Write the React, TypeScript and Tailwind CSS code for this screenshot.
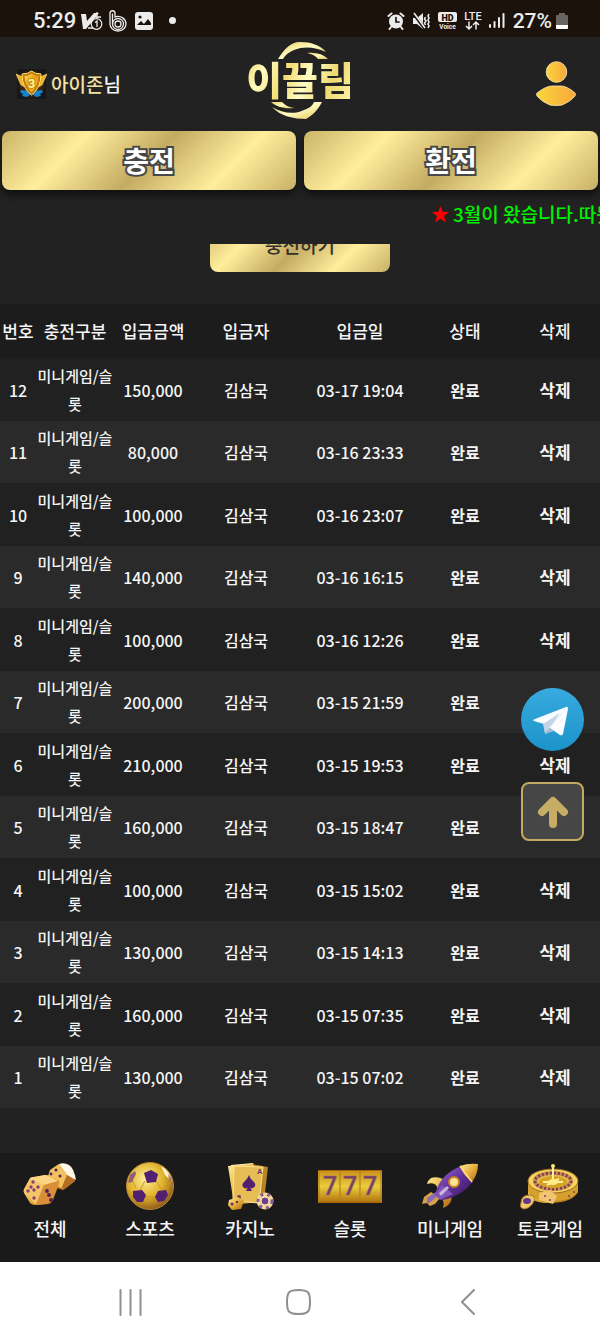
import React from "react";

type Deposit = { no: number; amount: string; date: string };

const deposits: Deposit[] = [
  { no: 12, amount: "150,000", date: "03-17 19:04" },
  { no: 11, amount: "80,000", date: "03-16 23:33" },
  { no: 10, amount: "100,000", date: "03-16 23:07" },
  { no: 9, amount: "140,000", date: "03-16 16:15" },
  { no: 8, amount: "100,000", date: "03-16 12:26" },
  { no: 7, amount: "200,000", date: "03-15 21:59" },
  { no: 6, amount: "210,000", date: "03-15 19:53" },
  { no: 5, amount: "160,000", date: "03-15 18:47" },
  { no: 4, amount: "100,000", date: "03-15 15:02" },
  { no: 3, amount: "130,000", date: "03-15 14:13" },
  { no: 2, amount: "160,000", date: "03-15 07:35" },
  { no: 1, amount: "130,000", date: "03-15 07:02" },
];

const gold =
  "bg-[linear-gradient(135deg,#cbb467_0%,#ffee9c_25%,#c4ab63_50%,#ffee9c_75%,#c8b066_100%)]";

function StatusBar() {
  return (
    <div className="flex h-[37px] items-center justify-between bg-[#1b120c] pt-1 pr-8 pl-[33px] font-['Roboto',sans-serif] text-[#ececec]">
      <div className="flex items-center gap-2">
        <span className="text-[22px] leading-7">5:29</span>
        <svg className="-ml-1 h-5 w-[23px]" viewBox="0 0 23 20" fill="none" stroke="#ececec">
          <path d="M1 3h5l1 7 7-8h5L6 18H3z" fill="#ececec" stroke="none" />
          <path d="M13 6h8M17 1v6M10 12l4-3M8 17h5" strokeWidth="1.3" />
          <circle cx="16.500" cy="13" r="5.300" fill="#1b120c" strokeWidth="1.200" />
          <path d="M15 11.500l2-1.500v6" strokeWidth="1.300" />
        </svg>
        <svg className="-ml-0.5 h-[22px] w-[18px]" viewBox="0 0 18 22" fill="none" stroke="#ececec" strokeWidth="1.300">
          <path d="M1 14V3c0-3 5-3 5 0v4c6-2 11 2 11 7 0 4-3.500 7-8 7s-8-3-8-7z" />
          <path d="M3.500 14V3.500" />
          <circle cx="9" cy="14" r="5.500" />
          <circle cx="9" cy="14" r="3" />
        </svg>
        <svg className="h-[18px] w-[18px]" viewBox="0 0 18 18">
          <rect width="18" height="18" rx="3" fill="#ececec" />
          <circle cx="5" cy="5" r="1.600" fill="#1b120c" />
          <path d="M2 13l4-4 3 3 4-5 3 4v2z" fill="#1b120c" />
        </svg>
        <span className="ml-2 h-[7px] w-[7px] rounded-full bg-[#ececec]" />
      </div>
      <div className="flex items-center gap-2">
        <svg className="h-[18px] w-[18px]" viewBox="0 0 18 18" fill="none" stroke="#ececec" strokeWidth="2" strokeLinecap="round">
          <path d="M1.500 4l3-2.500M16.500 4l-3-2.500M4 15l-1.500 2M14 15l1.500 2" />
          <circle cx="9" cy="9.500" r="7" fill="#ececec" stroke="none" />
          <path d="M9 5.500v4.500h3" stroke="#1b120c" strokeWidth="1.700" />
        </svg>
        <svg className="h-[18px] w-[17px]" viewBox="0 0 17 18" fill="none" stroke="#ececec" strokeWidth="1.600">
          <path d="M0 6h4l6-5v16l-6-5H0z" fill="#ececec" stroke="none" />
          <path d="M0 1l12 16" stroke="#1b120c" strokeWidth="3" />
          <path d="M1 1l11 15M12.500 5l-1 2 1.500 2-1.500 2 1 2M16 2l-1 2 1 2-1 2 1 2-1 2 1 2-1 2" />
        </svg>
        <svg className="h-[17px] w-[19px]" viewBox="0 0 19 17">
          <rect width="19" height="10" rx="2" fill="#ececec" />
          <text x="9.500" y="8.500" textAnchor="middle" fontSize="9" fontWeight="900" fill="#1b120c">HD</text>
          <text x="9.500" y="16.500" textAnchor="middle" fontSize="6.500" fontWeight="700" fill="#ececec">Voice</text>
        </svg>
        <svg className="-ml-0.5 h-[19px] w-[20px]" viewBox="0 0 20 19" stroke="#ececec" fill="none" strokeWidth="1.500">
          <text x="10" y="8.500" textAnchor="middle" fontSize="11" fontWeight="500" fill="#ececec" stroke="none">LTE</text>
          <path d="M6 10.500v7M3 15l3 3 3-3M13 18.500v-7M10 14l3-3 3 3" />
        </svg>
        <svg className="-ml-0.5 h-[17px] w-[16px]" viewBox="0 0 16 17" fill="#ececec">
          <rect x="0" y="12" width="2" height="4" rx="1" />
          <rect x="4.500" y="9" width="2" height="7" rx="1" />
          <rect x="9" y="5" width="2" height="11" rx="1" />
          <rect x="13.500" y="1" width="2" height="15" rx="1" />
        </svg>
        <span className="text-[21px] leading-7">27%</span>
        <svg className="-ml-1 h-[18px] w-3" viewBox="0 0 12 18">
          <path d="M3 1h6v2h2q1 0 1 1v9H0V4q0-1 1-1h2z" fill="#69645f" />
          <path d="M0 13h12v3q0 1-1 1H1q-1 0-1-1z" fill="#fff" />
        </svg>
      </div>
    </div>
  );
}

function Medal() {
  return (
    <svg className="h-8 w-[31px]" viewBox="0 0 31 32">
      <defs>
        <linearGradient id="medal" x1="0" y1="0" x2="1" y2="1">
          <stop offset="0" stopColor="#ffdf59" />
          <stop offset=".5" stopColor="#e69a16" />
          <stop offset="1" stopColor="#ffd242" />
        </linearGradient>
        <radialGradient id="glow">
          <stop offset="0" stopColor="#a85b00" />
          <stop offset="1" stopColor="#141414" />
        </radialGradient>
      </defs>
      <rect x="1" y="1" width="29" height="30" fill="url(#glow)" opacity=".75" />
      <path d="M5 22l7 1 3 3-4 3-5-1 1-2-3-2zM26 22l-7 1-3 3 4 3 5-1-1-2 3-2z" fill="#1682cf" />
      <path d="M0 6l7 3 2 10-4-2zM31 6l-7 3-2 10 4-2z" fill="#f3ae25" stroke="#ffe582" strokeWidth=".6" />
      <path d="M6 6q6 0 9.500-3Q19 6 25 6q0 14-9.500 21Q6 20 6 6z" fill="#c57908" stroke="#ffe26e" />
      <path d="M8.500 8q4 0 7-2.500Q19 8 22.500 8q-.5 10-7 16Q9 18 8.500 8z" fill="url(#medal)" />
      <text x="15.500" y="19.500" textAnchor="middle" fontFamily="Roboto" fontSize="13" fontWeight="900" fill="#ffef8a" stroke="#c27c0a" strokeWidth="1.500" paintOrder="stroke">3</text>
    </svg>
  );
}

function Logo() {
  return (
    <a href="#home" className="relative flex h-20 w-28 items-center justify-center">
      <svg className="absolute inset-0 h-20 w-28" viewBox="0 0 112 80" aria-hidden="true">
        <defs>
          <linearGradient id="swoosh" x1="0" y1="0" x2="1" y2="1">
            <stop offset="0" stopColor="#ecd060" />
            <stop offset=".5" stopColor="#fffcc4" />
            <stop offset="1" stopColor="#e2c350" />
          </linearGradient>
        </defs>
        <g fill="url(#swoosh)">
          <path d="M34 19C40 9 47 2 56 2c11 0 20 3 26 10-11-5-22-6-32-2-5 2-9 5-11 9z" />
          <path d="M63 13c9-1 16 1 21 6H74c-2-3-6-5-11-6z" />
          <path d="M27 62h11c3 3 6 5 12 6-10 1-17-1-23-6z" />
          <path d="M28 67c10 6 22 8 32 3 6-2 9-5 10-8h8c-4 8-9 13-16 17-12 0-26-3-34-12z" />
        </g>
      </svg>
      <span className="relative bg-[linear-gradient(115deg,#efd468,#fffcbe_18%,#f3dc74_38%,#fffcc4_55%,#eed970_75%,#fff8ae)] bg-clip-text pb-1 font-['Noto_Sans_CJK_KR',sans-serif] text-[39px] leading-10 font-black whitespace-nowrap text-transparent">
        이끌림
      </span>
    </a>
  );
}

function Header() {
  return (
    <header className="grid h-[94px] grid-cols-3 items-center pr-6 pl-4">
      <div className="flex items-center gap-1">
        <Medal />
        <span className="text-[19px] leading-7 whitespace-nowrap">
          <span className="text-[#f6e2a2]">아이존</span>님
        </span>
      </div>
      <div className="-mt-2 ml-2 flex justify-center">
        <Logo />
      </div>
      <button type="button" aria-label="내 정보" className="justify-self-end">
        <svg className="h-[46px] w-10" viewBox="0 0 40 46">
          <defs>
            <linearGradient id="user">
              <stop offset="0" stopColor="#f9d63c" />
              <stop offset="1" stopColor="#f8a83a" />
            </linearGradient>
          </defs>
          <g fill="url(#user)" stroke="#ffeebc" strokeWidth=".8">
            <circle cx="20.500" cy="11" r="10.300" />
            <path d="M1 32q9-7 15-7h9q6 0 14 7 1 1 0 3-5 6-13 9-6 1-12 0Q6 41 1 35q-1-2 0-3z" />
          </g>
        </svg>
      </button>
    </header>
  );
}

function GoldButton({ label }: { label: string }) {
  return (
    <button
      type="button"
      className={`h-[59px] flex-1 rounded-lg pb-0.5 text-[28px] leading-8 font-bold text-white shadow-[0_5px_7px_0_#111111] [-webkit-text-stroke:4px_#474747] [paint-order:stroke_fill] ${gold}`}
    >
      {label}
    </button>
  );
}

function DepositTable() {
  const cell = "p-0 text-center";
  return (
    <table className="w-full table-fixed border-collapse text-base leading-7 font-medium">
      <colgroup>
        <col className="w-[6%]" />
        <col className="w-[13%]" />
        <col className="w-[13%]" />
        <col className="w-[18%]" />
        <col className="w-[20%]" />
        <col className="w-[15%]" />
        <col className="w-[15%]" />
      </colgroup>
      <thead>
        <tr className="h-[54px] bg-[#1c1c1c] text-[17px]">
          {["번호", "충전구분", "입금금액", "입금자", "입금일", "상태", "삭제"].map((h) => (
            <th key={h} scope="col" className="p-0 text-center font-medium whitespace-nowrap">
              {h}
            </th>
          ))}
        </tr>
      </thead>
      <tbody>
        {deposits.map((d) => (
          <tr key={d.no} className="h-[63px] bg-[#212121] even:h-[62px] even:bg-[#2a2a2a]">
            <td className={cell}>{d.no}</td>
            <td className={`${cell} text-[15px] whitespace-nowrap`}>
              미니게임/슬
              <br />롯
            </td>
            <td className={cell}>{d.amount}</td>
            <td className={cell}>김삼국</td>
            <td className={cell}>{d.date}</td>
            <td className={`${cell} font-bold`}>완료</td>
            <td className={cell}>
              <button type="button" className="text-[17px] leading-7 font-bold">
                삭제
              </button>
            </td>
          </tr>
        ))}
      </tbody>
    </table>
  );
}

function IconDefs() {
  return (
    <defs>
      <linearGradient id="g1" x1="0" y1="0" x2="1" y2="1">
        <stop offset="0" stopColor="#ffeb9a" />
        <stop offset=".5" stopColor="#e7ae3b" />
        <stop offset="1" stopColor="#a86419" />
      </linearGradient>
      <radialGradient id="g2" cx=".4" cy=".35" r=".65">
        <stop offset="0" stopColor="#fff09b" />
        <stop offset=".6" stopColor="#dfb129" />
        <stop offset="1" stopColor="#95621b" />
      </radialGradient>
      <linearGradient id="g3" x1="0" y1="0" x2="1" y2="1">
        <stop offset="0" stopColor="#a26bd5" />
        <stop offset=".5" stopColor="#60309a" />
        <stop offset="1" stopColor="#351355" />
      </linearGradient>
    </defs>
  );
}

function DiceIcon() {
  return (
    <svg className="h-12 w-16" viewBox="0 0 64 48">
      <IconDefs />
      <path d="M41 2l12 4 4 13-12 9-16-5 5-16z" fill="#c67b2a" />
      <path d="M41 2q5-2 10 1 5 3 7 15l-9-5z" fill="#fff8e4" />
      <path d="M32 8l9-6 8 11-5 13-16-6z" fill="#f3c160" />
      <path d="M49 13l8 6-10 8-3-2z" fill="#b46d22" />
      <path d="M11 18q1-3 4-3l12-2q3 0 5 1l8 4q2 1 1 4l-6 16q-1 3-5 4l-13 1q-3 0-5-2L6 31q-1-2 0-4z" fill="url(#g1)" />
      <path d="M12 16l16-3 12 6-14 4z" fill="#fbd484" />
      <path d="M12 17l14 6-8 19-2-1L6 29z" fill="#f6c46a" />
      <path d="M26 23l15-4-7 19-5 4-11 1z" fill="#d98f38" />
      <g fill="#8a3f74">
        <circle cx="15" cy="20" r="1.700" /><circle cx="20" cy="25" r="1.700" /><circle cx="13" cy="25" r="1.700" />
        <circle cx="10" cy="29" r="1.700" /><circle cx="16" cy="28" r="1.700" /><circle cx="16" cy="36" r="1.700" />
      </g>
      <g fill="#4f2253">
        <circle cx="29" cy="29" r="1.900" /><circle cx="31" cy="33" r="1.900" /><circle cx="33" cy="38" r="1.900" />
        <circle cx="38" cy="8" r="1.500" /><circle cx="42" cy="14" r="1.500" /><circle cx="33" cy="12" r="1.400" />
      </g>
    </svg>
  );
}

function BallIcon() {
  return (
    <svg className="h-12 w-16" viewBox="0 0 64 48">
      <circle cx="32" cy="24" r="23.500" fill="url(#g2)" stroke="#b48734" />
      <path d="M43 4q9 5 11 16l-7-7z" fill="#fff2cf" />
      <g fill="none" stroke="#c9962a" strokeWidth="1">
        <path d="M32 20v-5M27 19l-5 9M38 19l6 9M27 35h11M18 26l-4-8M49 27l3-7M27 35l4 6 7-6" />
      </g>
      <g fill="#512071">
        <path d="M26 11l7-3 7 4-2 8-9 1z" />
        <path d="M15 29l9-1 4 5-3 7h-6l-4-5z" />
        <path d="M40 29l8-1 2 5-4 6-6 1-3-5z" />
        <path d="M12 13l5-4 1 3-4 8-4 1z" fill="#925d75" />
        <path d="M50 12l3 4 1 5-3-3z" fill="#aa7c70" />
      </g>
    </svg>
  );
}

function CardsIcon() {
  return (
    <svg className="h-12 w-16" viewBox="0 0 64 48">
      <path d="M34 2l16 3-4 34-16-2z" fill="#b98424" />
      <path d="M13 3l22-2 8 38-25 3z" fill="#fff0b5" />
      <path d="M10 4l25-2 6 38-25 3z" fill="url(#g1)" />
      <path d="M16 4l29 1-4 36-26-2z" fill="#e6bd55" stroke="#ffe298" />
      <path d="M31 13q1 4 5 7 3 4-1 6-2 1-3-1l2 4h-6l2-4q-2 3-5 0-2-3 2-6 3-3 4-6z" fill="#51216f" />
      <text x="39" y="12" fontFamily="Roboto" fontSize="8" fontWeight="700" fill="#6c3868">A</text>
      <circle cx="21" cy="35" r="2" fill="#74345c" />
      <path d="M11 38l9-3 6 4-3 8-9 1-4-5z" fill="url(#g1)" />
      <circle cx="14" cy="42" r="1.500" fill="#6a3158" /><circle cx="19" cy="40" r="1.200" fill="#6a3158" />
      <circle cx="47" cy="39" r="8.500" fill="#f7d79a" />
      <circle cx="47" cy="39" r="7" fill="none" stroke="#846090" strokeWidth="3" strokeDasharray="3 4" />
      <circle cx="47" cy="39" r="4" fill="#6c3d91" stroke="#ffe8b1" />
    </svg>
  );
}

function SlotsIcon() {
  return (
    <svg className="h-12 w-16" viewBox="0 0 64 48">
      <defs>
        <linearGradient id="slot" x2="0" y2="1">
          <stop offset="0" stopColor="#c98e1a" /><stop offset=".5" stopColor="#e9cd3c" /><stop offset="1" stopColor="#b06f0c" />
        </linearGradient>
      </defs>
      <path d="M0 8h64v33H0z" fill="url(#slot)" />
      <path d="M1 8v32M22 8v32M42 8v32M63 8v32" stroke="#b8801a" strokeWidth="1.200" />
      <path d="M0 8.500h64M0 40h64" stroke="#a8620c" strokeWidth="1.200" />
      <g fontFamily="Roboto" fontWeight="500" fontSize="25" fill="#754060" stroke="#9c6578" strokeWidth=".6" textAnchor="middle">
        <text x="12" y="33">7</text><text x="32" y="33">7</text><text x="52" y="33">7</text>
      </g>
    </svg>
  );
}

function RocketIcon() {
  return (
    <svg className="h-12 w-16" viewBox="0 0 64 48">
      <path d="M25 17q-6-3-12-1-3 2-4 6 6-2 9 1l2 4zM31 32q4 2 2 7-2 5-8 7 2-7-2-10z" fill="url(#g1)" />
      <path d="M13 30l9 6-5 6-5 2-3-3-5 1 2-7z" fill="#d5a14b" />
      <path d="M9 36l9-6 3 3-10 8-2 0z" fill="#8e6cb4" />
      <path d="M17 33q4-20 26-29l12 16Q42 35 25 38z" fill="url(#g3)" />
      <path d="M17 33l7-10 11 9-13 6z" fill="#8255b8" />
      <path d="M42 4Q50 1 60 2q0 10-6 18Q45 13 42 4z" fill="url(#g1)" />
      <path d="M42 4q5 7 12 16" fill="none" stroke="#ffdc7a" strokeWidth="1.500" />
      <path d="M21 31l8-7 2 2-8 8z" fill="#cdb4e0" />
      <circle cx="36" cy="20" r="5" fill="#ffe494" stroke="#c78222" strokeWidth="2" />
    </svg>
  );
}

function RouletteIcon() {
  return (
    <svg className="h-12 w-16" viewBox="0 0 64 48">
      <path d="M10 18v14q4 10 24 9 21-1 26-11V18z" fill="url(#g1)" />
      <path d="M10 21v9q5 9 25 9 20-1 25-10V20q-7 10-25 11-18 0-25-10z" fill="#d5a12c" />
      <ellipse cx="35" cy="19" rx="25" ry="12" fill="#f5d35e" stroke="#9d6923" />
      <ellipse cx="35" cy="19" rx="18" ry="8" fill="#e6be52" stroke="#c98d5a" strokeWidth="4" />
      <ellipse cx="35" cy="19" rx="18" ry="8" fill="none" stroke="#7d4048" strokeWidth="3" strokeDasharray="2 2" />
      <ellipse cx="35" cy="20" rx="14" ry="6" fill="#d6a323" />
      <path d="M35 4v18M25 20h20M29 23l12-6" stroke="#fff0a4" strokeWidth="2" />
      <circle cx="35" cy="4" r="2" fill="#ffe778" /><ellipse cx="35" cy="20" rx="5" ry="3" fill="#ffec87" />
      <path d="M21 31l11-3 7 6-4 8-14-4z" fill="#f1c473" />
      <g fill="#75406d"><circle cx="27" cy="34" r="1" /><circle cx="32" cy="38" r="1" /><circle cx="51" cy="34" r="1" /><circle cx="56" cy="30" r="1" /></g>
      <path d="M3 41q0-8 9-8 6 1 4 6-3 7-10 8-5-1-3-6z" fill="#edcc68" stroke="#ad742e" />
      <ellipse cx="9" cy="39" rx="4" ry="3" fill="#64358d" />
    </svg>
  );
}

const menu = [
  { label: "전체", icon: <DiceIcon /> },
  { label: "스포츠", icon: <BallIcon /> },
  { label: "카지노", icon: <CardsIcon /> },
  { label: "슬롯", icon: <SlotsIcon /> },
  { label: "미니게임", icon: <RocketIcon /> },
  { label: "토큰게임", icon: <RouletteIcon /> },
];

function FloatingActions() {
  return (
    <div className="absolute top-[688px] right-4 flex flex-col gap-8">
      <a href="#telegram" aria-label="텔레그램">
        <svg className="h-[63px] w-[63px]" viewBox="0 0 63 63">
          <defs>
            <linearGradient id="tg" x2="0" y2="1">
              <stop offset="0" stopColor="#38aadf" /><stop offset="1" stopColor="#1b94c9" />
            </linearGradient>
          </defs>
          <circle cx="31.500" cy="31.500" r="31.500" fill="url(#tg)" />
          <path d="M13 33Q11 32 14 31L45 19q2-1 2 2l-5 25q-1 2-3 1L23 36z" fill="#fafcff" />
          <path d="M22 36l2 10 4-5 11-16z" fill="#c3d3e6" />
          <path d="M24 46l5-6 4 3z" fill="#a9bdd5" />
          <path d="M28 39l17-18-18 21z" fill="#dce7f3" />
        </svg>
      </a>
      <button
        type="button"
        aria-label="맨 위로"
        className="-mt-px flex h-[59px] w-[63px] items-center justify-center rounded-lg border-2 border-[#c2aa62] bg-[#464646]"
      >
        <svg className="h-[34px] w-8" viewBox="0 0 32 34" fill="none" stroke="#c5ad65" strokeWidth="8" strokeLinecap="round" strokeLinejoin="round">
          <path d="M16 29V8M5 17L16 6l11 11" />
        </svg>
      </button>
    </div>
  );
}

export default function App() {
  return (
    <div className="relative w-full overflow-hidden bg-[#222222] font-['Noto_Sans_CJK_KR',sans-serif] font-medium text-[#f5f5f5]">
      <StatusBar />
      <Header />
      <div className="flex gap-2 px-0.5">
        <GoldButton label="충전" />
        <GoldButton label="환전" />
      </div>
      <div className="flex h-[54px] items-start overflow-hidden pt-[10px] pl-[72%] text-[19px] leading-7 whitespace-nowrap text-[#00f200]">
        <span className="flex items-center gap-1">
          <svg className="h-[17px] w-[17px] shrink-0" viewBox="0 0 16 16" fill="#ff0000">
            <path d="M8 0l2 5.500 6 .2-4.700 3.700L13 15.500 8 12l-5 3.500 1.700-6.100L0 5.700l6-.2z" />
          </svg>
          <span>3월이 왔습니다.따뜻</span>
        </span>
      </div>
      <main>
        <div className="mb-8 flex h-7 items-end justify-center overflow-hidden">
          <button type="button" className={`h-[54px] w-[180px] shrink-0 rounded-lg text-[19px] leading-7 text-[#33302a] ${gold}`}>
            충전하기
          </button>
        </div>
        <DepositTable />
      </main>
      <nav className="mt-[45px] grid h-[109px] grid-cols-6 bg-[#1a1a1a] pt-[9px]">
        {menu.map((m) => (
          <a key={m.label} href={`#${m.label}`} className="flex flex-col items-center gap-1 text-lg leading-7">
            {m.icon}
            <span className="whitespace-nowrap">{m.label}</span>
          </a>
        ))}
      </nav>
      <div className="flex h-[76px] items-center justify-between bg-white px-[118px] pt-1">
        <button type="button" aria-label="최근 앱">
          <svg className="h-[30px] w-6" viewBox="0 0 24 30" stroke="#8f8f8f" strokeWidth="2" strokeLinecap="round">
            <path d="M2.500 3v25M12.500 3v25M22.500 3v25" />
          </svg>
        </button>
        <button type="button" aria-label="홈">
          <svg className="h-[30px] w-7" viewBox="0 0 28 30" fill="none" stroke="#8f8f8f" strokeWidth="2">
            <path d="M12.500 3C22 3 24 5 24 15s-2 12-11.500 12S1 25 1 15 3 3 12.500 3z" />
          </svg>
        </button>
        <button type="button" aria-label="뒤로">
          <svg className="h-[30px] w-6" viewBox="0 0 24 30" fill="none" stroke="#8f8f8f" strokeWidth="2" strokeLinecap="round" strokeLinejoin="round">
            <path d="M16 3L4 15l12 12" />
          </svg>
        </button>
      </div>
      <FloatingActions />
    </div>
  );
}
